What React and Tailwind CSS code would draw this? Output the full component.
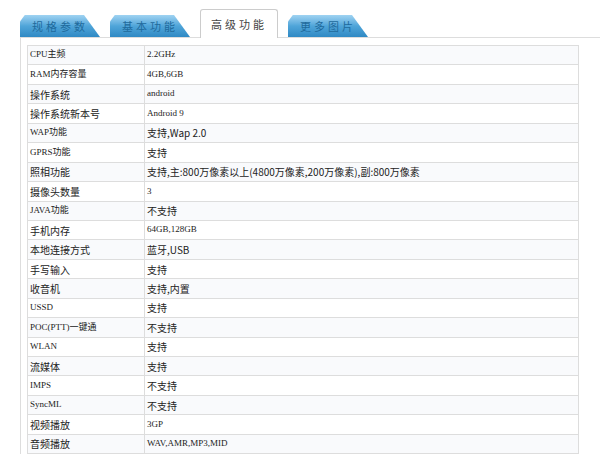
const rows = [
  ["CPU主频", "2.2GHz", true, true],
  ["RAM内存容量", "4GB,6GB", true, true],
  ["操作系统", "android", false, true],
  ["操作系统新本号", "Android 9", false, true],
  ["WAP功能", "支持,Wap 2.0", true, false],
  ["GPRS功能", "支持", true, false],
  ["照相功能", "支持,主:800万像素以上(4800万像素,200万像素),副:800万像素", false, false],
  ["摄像头数量", "3", false, true],
  ["JAVA功能", "不支持", true, false],
  ["手机内存", "64GB,128GB", false, true],
  ["本地连接方式", "蓝牙,USB", false, false],
  ["手写输入", "支持", false, false],
  ["收音机", "支持,内置", false, false],
  ["USSD", "支持", true, false],
  ["POC(PTT)一键通", "不支持", true, false],
  ["WLAN", "支持", true, false],
  ["流媒体", "支持", false, false],
  ["IMPS", "不支持", true, false],
  ["SyncML", "不支持", true, false],
  ["视频播放", "3GP", false, true],
  ["音频播放", "WAV,AMR,MP3,MID", false, true],
  ["", "", false, false],
];

const Tab = ({ label, active }) =>
  active ? (
    <div className="w-[78px] h-[29px] bg-white border border-b-0 border-[#ccc] rounded-t-[3px] flex items-center justify-center text-[11px] text-[#444] tracking-[3px] -mb-px relative z-10">
      {label}
    </div>
  ) : (
    <div
      className="w-[80px] h-[22px] bg-gradient-to-b from-[#9fd3f2] via-[#4fa5d9] to-[#2f89c4] flex items-center pl-[12px] text-[11px] text-[#1f6a9c] tracking-[3px]"
      style={{ clipPath: "polygon(0 30%, 6% 0, 80% 0, 100% 100%, 0 100%)" }}
    >
      {label}
    </div>
  );

const cellFont = (latin) => ({
  fontFamily: latin ? "'Liberation Serif','Noto Sans CJK SC',serif" : "'Noto Sans CJK SC',sans-serif",
});

export default function App() {
  return (
    <div className="w-[600px] h-[454px] overflow-hidden bg-white" style={{ fontFamily: "'Noto Sans CJK SC',sans-serif" }}>
      <div className="flex items-end gap-[10px] pl-[20px] pt-[9px]">
        <Tab label="规格参数" />
        <Tab label="基本功能" />
        <Tab label="高级功能" active />
        <Tab label="更多图片" />
      </div>
      <div className="border-t border-l border-[#ddd] ml-[20px] pt-[7px] pl-[6px]">
        <div className="w-[552px] border-t border-x border-[#ddd]">
          {rows.map(([k, v, latinK, latinV], i) => (
            <div key={i} className={`flex h-[19.45px] border-b border-[#ddd] text-[#222] ${i % 2 === 0 ? "bg-[#f9fafc]" : "bg-white"}`}>
              <div className={`w-[117px] border-r border-[#ddd] pl-[2px] flex items-center whitespace-nowrap ${latinK ? "text-[9px]" : "text-[10px]"}`} style={cellFont(latinK)}>{k}</div>
              <div className={`flex-1 pl-[2px] flex items-center whitespace-nowrap ${latinV ? "text-[9px]" : "text-[10px]"}`} style={cellFont(latinV)}>{v}</div>
            </div>
          ))}
        </div>
      </div>
    </div>
  );
}
